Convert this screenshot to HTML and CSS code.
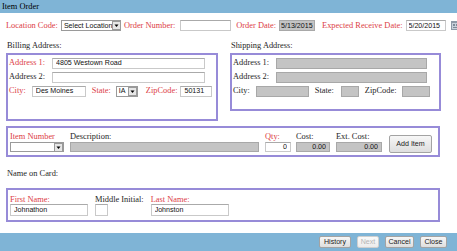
FILE: index.html
```html
<!DOCTYPE html>
<html lang="en">

<head>
    <meta charset="UTF-8">
    <title>Item Order</title>
    <link rel="stylesheet" href="styles.css">
</head>

<body>
    <div class="title-bar">Item Order</div>

    <!-- 订单信息 -->
    <div class="order-row">
        <label class="req">Location Code:</label>
        <span class="combo w-loc">Select Location<span class="combo-btn"><svg width="7" height="7" viewBox="0 0 7 7"><path d="M1.5 2.5h4L3.5 5z" fill="#000"/></svg></span></span>
        <label class="req ml3">Order Number:</label>
        <input class="field w-ordnum ml5" type="text">
        <label class="req ml5">Order Date:</label>
        <input class="field readonly w-odate ml3" type="text" value="5/13/2015">
        <label class="req ml7">Expected Receive Date:</label>
        <input class="field w-edate ml3" type="text" value="5/20/2015">
        <span class="cal-icon"><svg width="9" height="9" viewBox="0 0 9 9"><rect x="0" y="0" width="9" height="9" fill="#8e9aa8"/><rect x="1" y="2" width="7" height="6" fill="#c9d2dc"/><rect x="2" y="3" width="2" height="2" fill="#7d8a98"/><rect x="5" y="3" width="2" height="2" fill="#7d8a98"/><rect x="2" y="6" width="5" height="1" fill="#7d8a98"/></svg></span>
    </div>

    <!-- 地址 -->
    <div class="address-row">
        <div class="address billing">
            <div class="group-title">Billing Address:</div>
            <div class="group-box">
                <div class="line">
                    <label class="req lbl-col">Address 1:</label>
                    <input class="field w-addr" type="text" value="4805 Westown Road">
                </div>
                <div class="line">
                    <label class="lbl-col">Address 2:</label>
                    <input class="field w-addr" type="text">
                </div>
                <div class="line">
                    <label class="req">City:</label>
                    <input class="field w-city ml6" type="text" value="Des Moines">
                    <label class="req ml6">State:</label>
                    <span class="combo w-state ml5">IA<span class="combo-btn"><svg width="7" height="7" viewBox="0 0 7 7"><path d="M1.5 2.5h4L3.5 5z" fill="#000"/></svg></span></span>
                    <label class="req ml8">ZipCode:</label>
                    <input class="field w-zip ml3" type="text" value="50131">
                </div>
            </div>
        </div>

        <div class="address shipping">
            <div class="group-title">Shipping Address:</div>
            <div class="group-box">
                <div class="line">
                    <label class="lbl-col">Address 1:</label>
                    <input class="field readonly w-saddr" type="text">
                </div>
                <div class="line">
                    <label class="lbl-col">Address 2:</label>
                    <input class="field readonly w-saddr" type="text">
                </div>
                <div class="line">
                    <label>City:</label>
                    <input class="field readonly w-scity ml6" type="text">
                    <label class="ml6">State:</label>
                    <input class="field readonly w-sstate ml7" type="text">
                    <label class="ml6">ZipCode:</label>
                    <input class="field readonly w-szip ml6" type="text">
                </div>
            </div>
        </div>
    </div>

    <!-- 商品 -->
    <div class="item-box">
        <div class="col">
            <label class="req">Item Number</label>
            <span class="combo w-item"><span class="combo-btn"><svg width="7" height="7" viewBox="0 0 7 7"><path d="M1.5 2.5h4L3.5 5z" fill="#000"/></svg></span></span>
        </div>
        <div class="col ml6">
            <label>Description:</label>
            <input class="field readonly w-desc" type="text">
        </div>
        <div class="col ml6">
            <label class="req">Qty:</label>
            <input class="field num w-qty" type="text" value="0">
        </div>
        <div class="col ml5">
            <label>Cost:</label>
            <input class="field readonly num w-cost" type="text" value="0.00">
        </div>
        <div class="col ml6">
            <label>Ext. Cost:</label>
            <input class="field readonly num w-ext" type="text" value="0.00">
        </div>
        <button class="btn add-btn">Add Item</button>
    </div>

    <!-- 持卡人 -->
    <div class="card-title">Name on Card:</div>
    <div class="card-box">
        <div class="col">
            <label class="req">First Name:</label>
            <input class="field w-name" type="text" value="Johnathon">
        </div>
        <div class="col ml7">
            <label>Middle Initial:</label>
            <input class="field w-mid" type="text">
        </div>
        <div class="col ml7">
            <label class="req">Last Name:</label>
            <input class="field w-name" type="text" value="Johnston">
        </div>
    </div>

    <div class="footer-bar">
        <button class="btn w-hist">History</button>
        <button class="btn w-next" disabled>Next</button>
        <button class="btn w-cancel">Cancel</button>
        <button class="btn w-close">Close</button>
    </div>
</body>

</html>
```

FILE: styles.css
```css
* {
    padding: 0;
    margin: 0;
    box-sizing: border-box;
}

body {
    width: 457px;
    height: 251px;
    overflow: hidden;
    font-family: "Liberation Serif", "Times New Roman", serif;
    font-size: 8.4px;
    color: #1e1e1e;
    background: #fff;
}

label {
    white-space: nowrap;
    line-height: 10px;
}

.req {
    color: #dc4046;
}

.ml3 { margin-left: 3px; }
.ml5 { margin-left: 5px; }
.ml6 { margin-left: 6px; }
.ml7 { margin-left: 7px; }
.ml8 { margin-left: 8px; }

.title-bar {
    height: 13px;
    line-height: 13px;
    padding-left: 2px;
    background: #7fb4d6;
    color: #000;
}

/* 输入框 */
.field {
    height: 11px;
    padding: 0 3px;
    border: 1px solid #c9c9c9;
    border-top-color: #aaa;
    background: #fff;
    font-family: "Liberation Sans", Arial, sans-serif;
    font-size: 7.1px;
    color: #111;
    outline: none;
}

.field.readonly {
    background: #c4c4c4;
    border-color: #a8a8a8;
}

.field.num {
    text-align: right;
}

.combo {
    display: inline-flex;
    align-items: center;
    height: 11px;
    padding-left: 2px;
    border: 1px solid #9a9a9a;
    background: #fff;
    font-family: "Liberation Sans", Arial, sans-serif;
    font-size: 7.1px;
    color: #111;
    white-space: nowrap;
}

.combo-btn {
    display: flex;
    align-items: center;
    justify-content: center;
    width: 9px;
    height: 9px;
    margin-left: auto;
    background: #e6e6e6;
    border: 1px solid #9a9a9a;
}

.cal-icon {
    display: flex;
    margin-left: 5px;
}

/* 第一行 */
.order-row {
    display: flex;
    align-items: center;
    height: 11px;
    margin: 7px 0 0 6px;
}

.w-loc { width: 60px; margin-left: 3px; }
.w-ordnum { width: 51px; }
.w-odate { width: 36px; padding: 0 1px; border-color: #555; }
.w-edate { width: 40px; padding: 0 2px; }

/* 地址 */
.address-row {
    display: flex;
    align-items: flex-start;
    margin-top: 10px;
}

.group-title {
    height: 11px;
    line-height: 10px;
    padding-left: 1px;
    margin-bottom: 1px;
}

.group-box {
    border: 2px solid #978bd8;
    padding: 1px 0 0 1px;
}

.billing {
    width: 212px;
    margin-left: 6px;
}

.billing .group-box {
    height: 68px;
}

.shipping {
    width: 211px;
    margin-left: 12px;
}

.shipping .group-box {
    height: 58px;
}

.line {
    display: flex;
    align-items: center;
    height: 14px;
}

.lbl-col {
    width: 43px;
}

.w-addr { width: 153px; }
.w-city { width: 54px; }
.w-state { width: 22px; }
.w-zip { width: 32px; }

.w-saddr { width: 151px; }
.w-scity { width: 53px; }
.w-sstate { width: 18px; }
.w-szip { width: 28px; }

/* 商品 */
.item-box {
    display: flex;
    align-items: flex-end;
    width: 434px;
    height: 31px;
    margin: 5px 0 0 6px;
    padding: 4px 0 0 2px;
    border: 2px solid #978bd8;
}

.col {
    display: flex;
    flex-direction: column;
    align-items: flex-start;
}

.item-box .col {
    margin-bottom: 3px;
}

.w-item { width: 54px; height: 10px; }
.w-desc { width: 189px; height: 10px; }
.w-qty { width: 26px; height: 10px; }
.w-cost { width: 34px; height: 10px; }
.w-ext { width: 46px; height: 10px; }

.btn {
    height: 12px;
    border: 1px solid #a3a3a3;
    border-radius: 2px;
    background: linear-gradient(#f7f7f7, #dedede);
    font-family: "Liberation Sans", Arial, sans-serif;
    font-size: 7.1px;
    color: #222;
}

.btn:disabled {
    color: #b5b5b5;
    border-color: #cfcfcf;
    background: linear-gradient(#fafafa, #ececec);
}

.add-btn {
    align-self: center;
    width: 43px;
    height: 18px;
    margin-left: 7px;
}

/* 持卡人 */
.card-title {
    height: 10px;
    line-height: 10px;
    margin: 12px 0 0 7px;
}

.card-box {
    display: flex;
    width: 434px;
    height: 34px;
    margin: 9px 0 0 6px;
    padding: 5px 0 0 2px;
    border: 2px solid #978bd8;
}

.card-box label {
    line-height: 9px;
}

.w-name { width: 78px; height: 12px; }
.w-mid { width: 13px; height: 12px; }

/* 底部 */
.footer-bar {
    display: flex;
    align-items: center;
    justify-content: flex-end;
    gap: 6px;
    height: 18px;
    margin-top: 11px;
    padding-right: 10px;
    background: #7fb4d6;
}

.w-hist { width: 32px; }
.w-next { width: 22px; }
.w-cancel { width: 29px; }
.w-close { width: 27px; }
```
